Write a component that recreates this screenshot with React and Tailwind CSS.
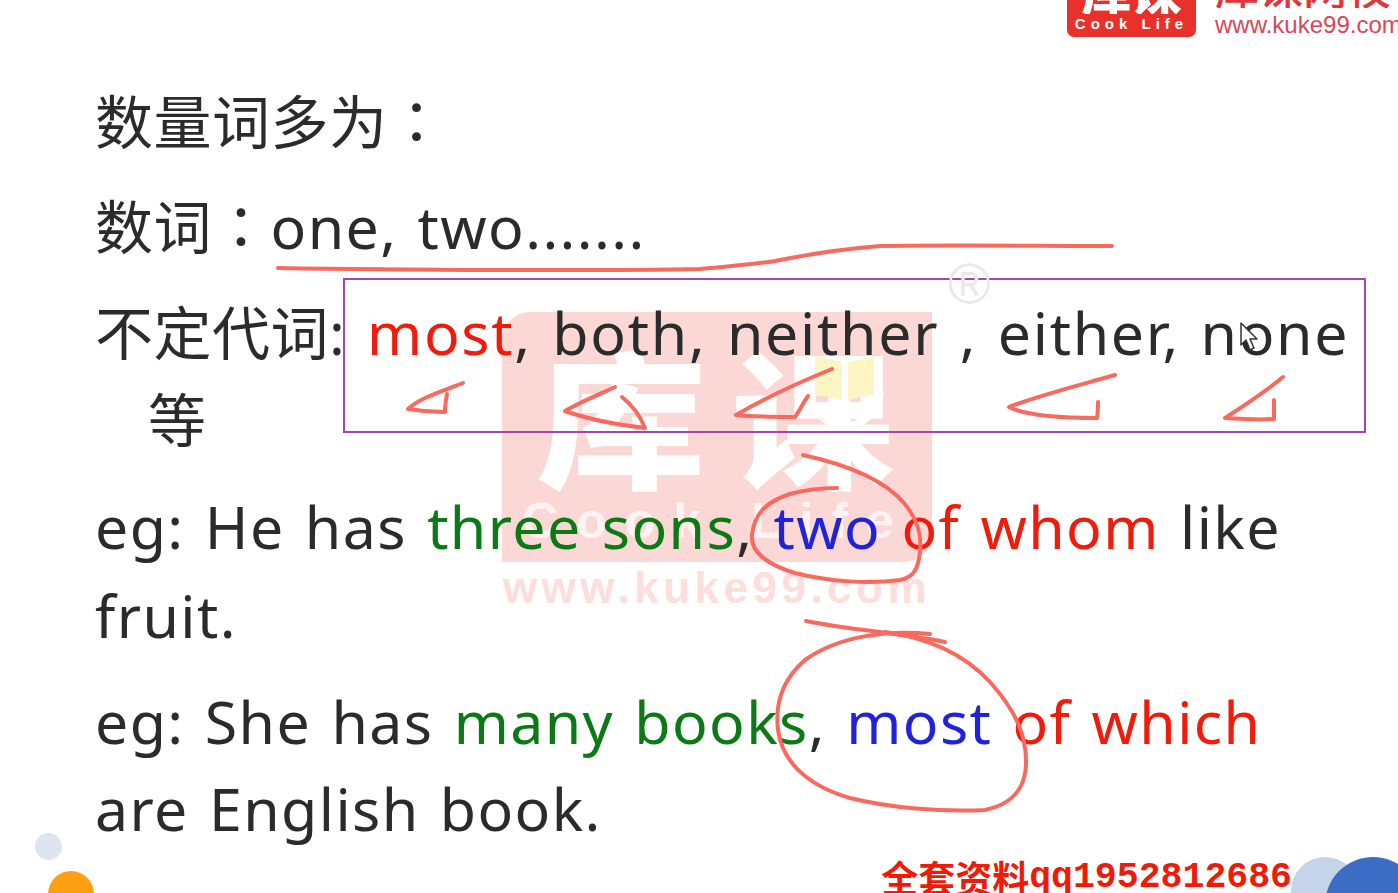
import React from 'react';

const INK = [
  'M278 268 C400 270 600 271 700 269 C730 266 750 265 775 261 C810 254 840 249 880 246 C960 245 1040 246 1112 246',
  'M463 383 C440 392 420 398 408 409 C420 411 435 412 445 412 C445 405 446 400 447 394',
  'M615 387 C598 395 580 402 565 411 C590 420 620 425 645 428 C640 415 632 405 622 397',
  'M832 369 C800 382 765 398 736 415 C755 417 775 417 795 417 C800 410 803 403 808 396',
  'M1115 375 C1080 385 1040 395 1009 407 C1025 415 1060 418 1097 418 C1098 412 1098 407 1098 402',
  'M1283 377 C1265 392 1245 405 1225 418 C1240 419 1258 420 1274 419 C1274 412 1274 406 1274 400',
  'M803 455 C835 462 880 475 904 503 C918 520 922 535 920 552 C918 568 915 577 900 580 C870 584 830 582 795 573 C768 565 750 552 752 535 C754 515 765 502 790 494 C808 489 820 488 837 488',
  'M806 621 C850 630 900 633 945 642',
  'M930 634 C890 630 840 635 805 660 C782 680 775 705 778 730 C782 760 805 785 850 798 C890 808 940 812 985 810 C1010 805 1025 790 1026 765 C1027 735 1015 710 990 682 C965 655 930 638 885 632',
];

function Watermark() {
  return (
    <div className="absolute left-[502px] top-[312px] w-[430px]">
      <div className="relative flex h-[250px] flex-col items-center overflow-hidden rounded-tl-[28px] rounded-br-[28px] bg-[#fbd8d6]">
        <div className="mt-[26px] flex h-[150px] w-full items-center justify-center gap-[44px] font-['Noto_Sans_CJK_SC',sans-serif] text-[148px] leading-none font-black text-white">
          <span className="scale-x-[1.15]">库</span>
          <span className="scale-x-[1.1]">课</span>
        </div>
        <div className="mt-[3px] font-['Liberation_Sans',sans-serif] text-[50px] leading-[60px] font-bold tracking-[18px] whitespace-nowrap text-[#fff4f3]">Cook Life</div>
        <svg className="absolute left-[300px] top-[38px]" width="90" height="110" viewBox="0 0 90 110">
          <path d="M13 6 L40 12 V50 L13 44 Z M46 12 L72 6 V44 L46 50 Z" fill="#fdf6c4" />
          <circle cx="43" cy="60" r="9" fill="#fff" />
          <path d="M8 42 C10 62 25 72 36 76 V110 H50 V76 C62 72 74 62 78 42" fill="none" stroke="#fff" strokeWidth="8" />
        </svg>
      </div>
      <div className="mt-[6px] text-center font-['Liberation_Sans',sans-serif] text-[44px] leading-[40px] font-bold tracking-[4.5px] whitespace-nowrap text-[#fcdedd]">www.kuke99.com</div>
    </div>
  );
}

function Cursor() {
  return (
    <svg className="absolute left-[1239px] top-[322px]" width="20" height="30" viewBox="0 0 20 30">
      <path d="M2 1 V23 L7 18 L11 28 L15 26 L11 17 H18 Z" fill="#fff" stroke="#333" strokeWidth="1.5" strokeLinejoin="round" />
    </svg>
  );
}

function Cn({ children }) {
  return <span className="text-[58px] tracking-[0.5px]">{children}</span>;
}

function Colon() {
  return <span className="font-['Noto_Sans_CJK_TC',sans-serif] text-[58px] tracking-[0.5px]">：</span>;
}

export default function App() {
  return (
    <div className="relative flex h-[893px] w-[1398px] flex-col overflow-hidden bg-white font-['Noto_Sans','Noto_Sans_CJK_SC',sans-serif] text-[#2b2b2b]">
      <Watermark />

      {/* logo cut by the top edge */}
      <header className="relative flex h-[37px] justify-end gap-[19px] overflow-hidden">
        <div className="flex h-[37px] w-[129px] flex-col items-center overflow-hidden rounded-b-[7px] bg-[#e8312b] text-white">
          <div className="flex h-[14px] items-end overflow-hidden font-['Noto_Sans_CJK_SC',sans-serif] text-[50px] leading-none font-black">库课</div>
          <div className="mt-[2px] font-['Liberation_Sans',sans-serif] text-[15px] leading-[16px] font-bold tracking-[5px] whitespace-nowrap">Cook Life</div>
        </div>
        <div className="flex w-[183px] flex-col whitespace-nowrap text-[#d8475a]">
          <div className="flex h-[9px] items-end overflow-hidden font-['Noto_Sans_CJK_SC',sans-serif] text-[44px] leading-none font-medium text-[#e0353a]">库课网校</div>
          <div className="mt-[5px] font-['Liberation_Sans',sans-serif] text-[24px] leading-[24px]">www.kuke99.com</div>
        </div>
      </header>

      <main className="relative flex flex-1 flex-col pl-[95px] text-[59px] tracking-[1.4px] [word-spacing:3.5px] whitespace-nowrap">
        <p className="mt-[38px] leading-[88px]"><Cn>数量词多为</Cn><Colon /></p>
        <p className="mt-[14px] leading-[88px]"><Cn>数词</Cn><Colon />one, two.......</p>
        <div className="mt-[18px] leading-[86px] tracking-[1.7px]">
          <p><Cn>不定代词</Cn>: <span className="text-[#ef1c0c]">most</span>, both, neither , either, none</p>
          <p className="pl-[53px]"><Cn>等</Cn></p>
        </div>
        <div className="mt-[19px] leading-[89px]">
          <p>eg: He has <span className="text-[#0b7a14]">three sons</span>, <span className="text-[#2222d8]">two</span> <span className="text-[#ef1c0c]">of whom</span> like</p>
          <p>fruit.</p>
        </div>
        <div className="mt-[18px] leading-[87px]">
          <p>eg: She has <span className="text-[#0b7a14]">many books</span>, <span className="text-[#2222d8]">most</span> <span className="text-[#ef1c0c]">of which</span></p>
          <p>are English book.</p>
        </div>
      </main>

      <footer className="relative flex h-[35px] justify-end pr-[106px] whitespace-nowrap text-[#f01a08]">
        <span className="font-['Noto_Sans_CJK_SC',sans-serif] text-[37px] leading-[38px] font-bold">全套资料</span>
        <span className="font-['Liberation_Mono',monospace] text-[36.5px] leading-[40px] font-bold">qq1952812686</span>
      </footer>

      {/* decorative circles */}
      <div className="absolute left-[35px] top-[833px] size-[27px] rounded-full bg-[#dde5f3]" />
      <div className="absolute left-[48px] top-[871px] size-[46px] rounded-full bg-[#ffa012]" />
      <div className="absolute left-[1291px] top-[857px] size-[68px] rounded-full bg-[#c6d4ea]" />
      <div className="absolute left-[1325px] top-[857px] size-[96px] rounded-full bg-[#3b6dc4]" />

      {/* purple frame drawn over the line */}
      <div className="absolute left-[343px] top-[278px] h-[155px] w-[1023px] border-2 border-[#a146ae]" />
      <div className="absolute left-[948px] top-[254px] font-['Liberation_Sans',sans-serif] text-[58px] leading-[60px] text-[#e9e9e9]">®</div>

      {/* pen annotations */}
      <svg className="absolute inset-0" width="1398" height="893" viewBox="0 0 1398 893" fill="none">
        {INK.map((d, i) => (
          <path key={i} d={d} stroke="#f8695e" strokeWidth="4" strokeLinecap="round" strokeLinejoin="round" />
        ))}
      </svg>
      <Cursor />
    </div>
  );
}
